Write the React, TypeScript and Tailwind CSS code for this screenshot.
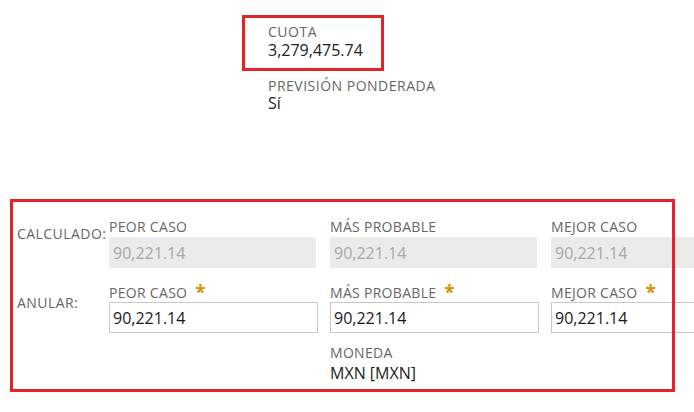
import React from "react";

const LABEL = "text-[#666666]";
const VALUE = "text-[#222222]";

function Star() {
  return (
    <span className="ml-[8px] text-[19px] font-bold leading-[19px] text-[#d4940a]">*</span>
  );
}

function DisabledField({ label, value }: { label: string; value: string }) {
  return (
    <div className="w-[221px] shrink-0">
      <div className={`text-[14px] leading-[20px] tracking-[0.3px] ${LABEL} whitespace-nowrap`}>{label}</div>
      <div className="flex h-[31px] w-[207px] items-center bg-[#ebebeb] pl-[4px] text-[16px] text-[#a8a8a8]">
        {value}
      </div>
    </div>
  );
}

function InputField({ label, value }: { label: string; value: string }) {
  return (
    <div className="w-[221px] shrink-0">
      <div className={`flex text-[14px] leading-[19px] tracking-[0.3px] ${LABEL} whitespace-nowrap`}>
        <span>{label}</span>
        <Star />
      </div>
      <div className="flex h-[31px] w-[209px] items-center border border-[#c8c8c8] bg-white pl-[3px] text-[16px] text-[#1a1a1a]">
        {value}
      </div>
    </div>
  );
}

export default function App() {
  return (
    <div className="h-[412px] w-[694px] overflow-hidden bg-white font-['Open_Sans','Noto_Sans',sans-serif]">
      <div className="flex flex-col pt-[15px]">
        {/* top block */}
        <div className="ml-[242px]">
          <div className="h-[56px] w-[142px] border-[3px] border-[#e5232b] pl-[23px] pt-[6px]">
            <div className={`text-[14px] leading-[16px] tracking-[0.5px] ${LABEL}`}>CUOTA</div>
            <div className={`mt-[1px] text-[16px] leading-[18px] ${VALUE}`}>3,279,475.74</div>
          </div>
          <div className="pl-[26px] pt-[6px]">
            <div className={`whitespace-nowrap text-[14px] leading-[17px] tracking-[0.5px] ${LABEL}`}>PREVISIÓN PONDERADA</div>
            <div className={`text-[16px] leading-[19px] ${VALUE}`}>Sí</div>
          </div>
        </div>

        {/* bottom block */}
        <div className="relative ml-[10px] mt-[86px] h-[193px] w-[665px]">
          <div className="pt-[18px]">
            <div className="flex">
              <div className={`w-[99px] shrink-0 whitespace-nowrap pl-[7px] pt-[7px] text-[14px] leading-[20px] tracking-[0.45px] ${LABEL}`}>
                CALCULADO:
              </div>
              <DisabledField label="PEOR CASO" value="90,221.14" />
              <DisabledField label="MÁS PROBABLE" value="90,221.14" />
              <DisabledField label="MEJOR CASO" value="90,221.14" />
            </div>
            <div className="mt-[15px] flex">
              <div className={`w-[99px] shrink-0 whitespace-nowrap pl-[7px] pt-[10px] text-[14px] leading-[20px] tracking-[0.45px] ${LABEL}`}>
                ANULAR:
              </div>
              <InputField label="PEOR CASO" value="90,221.14" />
              <InputField label="MÁS PROBABLE" value="90,221.14" />
              <InputField label="MEJOR CASO" value="90,221.14" />
            </div>
            <div className="mt-[10px] flex">
              <div className="w-[99px] shrink-0" />
              <div className="w-[221px] shrink-0" />
              <div className="w-[221px] shrink-0">
                <div className={`text-[14px] leading-[19px] tracking-[0.3px] ${LABEL}`}>MONEDA</div>
                <div className={`text-[16px] leading-[22px] ${VALUE}`}>MXN [MXN]</div>
              </div>
            </div>
          </div>
          <div className="pointer-events-none absolute inset-0 border-[3px] border-[#e5232b]" />
        </div>
      </div>
    </div>
  );
}
